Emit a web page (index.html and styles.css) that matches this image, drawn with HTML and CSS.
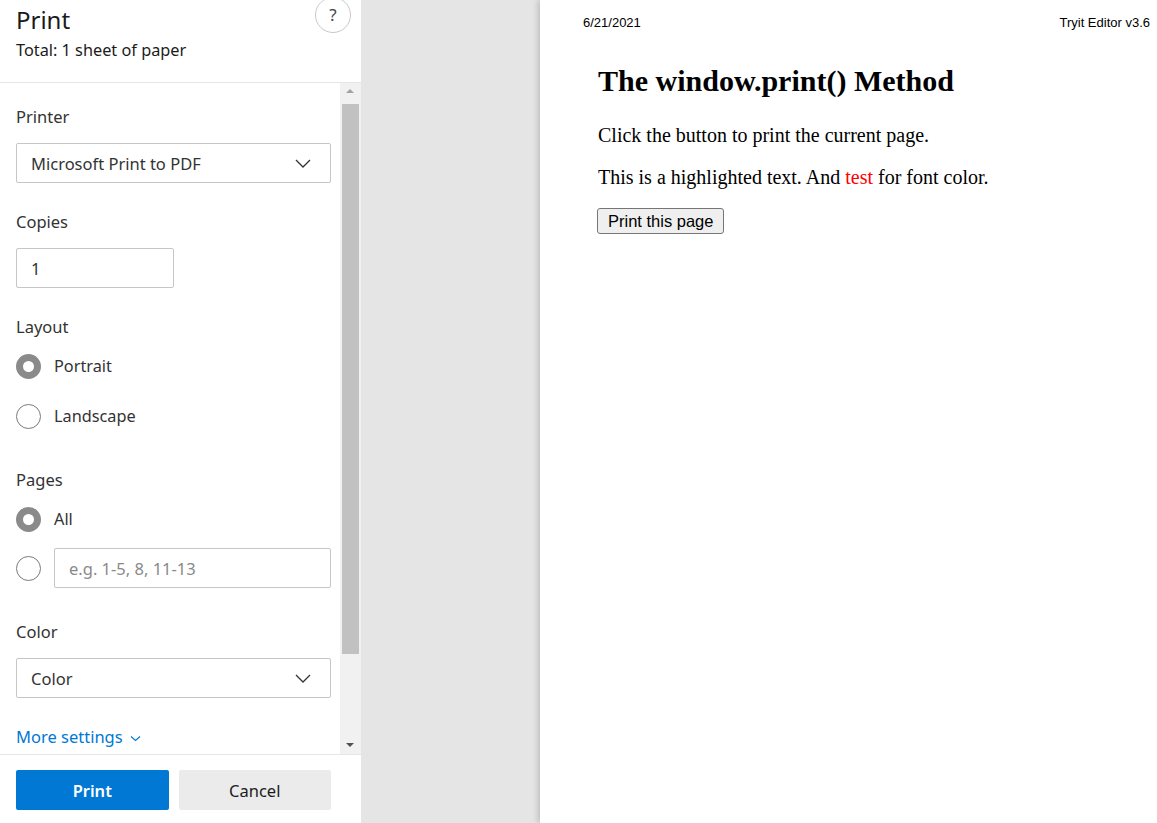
FILE: index.html
```html
<!DOCTYPE html>
<html lang="en">
<head>
<meta charset="utf-8">
<title>Print</title>
<link rel="stylesheet" href="styles.css">
</head>
<body>
<div class="app">
  <aside class="panel">
    <header class="panel-header">
      <div class="titles">
        <h1 class="title">Print</h1>
        <div class="subtitle">Total: 1 sheet of paper</div>
      </div>
      <button class="help" type="button">?</button>
    </header>
    <div class="scroll">
      <div class="content">
        <section class="group">
          <div class="label">Printer</div>
          <div class="select"><span>Microsoft Print to PDF</span>
            <svg class="chev" width="16" height="9" viewBox="0 0 16 9"><path d="M1 1 L8 8 L15 1" fill="none" stroke="#333" stroke-width="1.3"/></svg>
          </div>
        </section>
        <section class="group">
          <div class="label">Copies</div>
          <div class="input short">1</div>
        </section>
        <section class="group layout">
          <div class="label">Layout</div>
          <div class="radio-row first"><span class="radio on"></span><span class="rtext">Portrait</span></div>
          <div class="radio-row"><span class="radio"></span><span class="rtext">Landscape</span></div>
        </section>
        <section class="group pages">
          <div class="label">Pages</div>
          <div class="radio-row first"><span class="radio on"></span><span class="rtext">All</span></div>
          <div class="radio-row custom"><span class="radio"></span><div class="input wide placeholder">e.g. 1-5, 8, 11-13</div></div>
        </section>
        <section class="group color">
          <div class="label">Color</div>
          <div class="select"><span>Color</span>
            <svg class="chev" width="16" height="9" viewBox="0 0 16 9"><path d="M1 1 L8 8 L15 1" fill="none" stroke="#333" stroke-width="1.3"/></svg>
          </div>
        </section>
        <div class="more">More settings
          <svg width="11" height="7" viewBox="0 0 11 7"><path d="M1 1.5 L5.5 5.5 L10 1.5" fill="none" stroke="#0078d4" stroke-width="1.1"/></svg>
        </div>
      </div>
      <div class="scrollbar">
        <div class="arrow up"></div>
        <div class="thumb"></div>
        <div class="track-rest"></div>
        <div class="arrow down"></div>
      </div>
    </div>
    <footer class="panel-footer">
      <button class="btn primary" type="button">Print</button>
      <button class="btn secondary" type="button">Cancel</button>
    </footer>
  </aside>
  <main class="preview">
    <div class="page">
      <div class="page-head">
        <span>6/21/2021</span>
        <span>Tryit Editor v3.6</span>
      </div>
      <div class="doc">
        <h2 class="doc-title">The window.print() Method</h2>
        <p class="doc-p">Click the button to print the current page.</p>
        <p class="doc-p">This is a highlighted text. And <span class="red">test</span> for font color.</p>
        <button class="doc-btn" type="button">Print this page</button>
      </div>
    </div>
  </main>
</div>
</body>
</html>
```

FILE: styles.css
```css
* { box-sizing: border-box; }
html, body { margin: 0; padding: 0; height: 100%; }
body {
  font-family: "Noto Sans", "Open Sans", sans-serif;
  color: #1b1b1b;
  overflow: hidden;
}
.app {
  display: flex;
  height: 823px;
}
.panel {
  width: 361px;
  flex: none;
  display: flex;
  flex-direction: column;
  background: #fff;
}
.panel-header {
  height: 83px;
  border-bottom: 1px solid #e6e6e6;
  display: flex;
  justify-content: space-between;
  align-items: flex-start;
  padding: 0 10px 0 16px;
}
.title {
  margin: 4px 0 0;
  font-size: 24px;
  font-weight: 400;
  line-height: 32px;
  color: #1b1b1b;
}
.subtitle {
  font-size: 16.3px;
  line-height: 22px;
  margin-top: 3px;
  color: #1b1b1b;
}
.help {
  width: 36px;
  height: 36px;
  margin-top: -3px;
  border-radius: 50%;
  border: 1px solid #c8c8c8;
  background: #fff;
  font-family: "Noto Sans", sans-serif;
  font-size: 17px;
  color: #444;
  padding: 0;
  line-height: 34px;
}
.scroll {
  flex: 1;
  display: flex;
  min-height: 0;
}
.content {
  flex: 1;
  padding: 22px 9px 0 16px;
}
.label {
  font-size: 16.5px;
  line-height: 24px;
  color: #333;
  height: 24px;
}
.group { margin-bottom: 27px; }
.group.layout { margin-bottom: 40px; }
.group.pages { margin-bottom: 32px; }
.select {
  margin-top: 14px;
  height: 40px;
  border: 1px solid #c6c6c6;
  border-radius: 2px;
  display: flex;
  align-items: center;
  justify-content: space-between;
  padding: 0 19px 0 14px;
  font-size: 16.5px;
  color: #333;
}
.chev { display: block; }
.input {
  height: 40px;
  border: 1px solid #c6c6c6;
  border-radius: 2px;
  display: flex;
  align-items: center;
  padding: 0 14px;
  font-size: 16.5px;
  color: #333;
}
.input.short { width: 158px; margin-top: 14px; }
.input.wide { flex: 1; margin-left: 13px; }
.placeholder { color: #8a8a8a; }
.radio-row {
  display: flex;
  align-items: center;
  height: 24px;
  margin-top: 26px;
}
.radio-row.first { margin-top: 15px; }
.radio-row.custom { height: 40px; margin-top: 17px; }
.radio {
  width: 25px;
  height: 25px;
  border-radius: 50%;
  border: 1px solid #7a7a7a;
  background: #fff;
  flex: none;
}
.radio.on {
  border: 7px solid #8a8a8a;
}
.rtext {
  margin-left: 13px;
  font-size: 16.3px;
  color: #333;
}
.more {
  font-size: 16.5px;
  line-height: 24px;
  color: #0078d4;
  display: flex;
  align-items: center;
  gap: 7px;
}
.more svg { margin-top: 3px; }
.scrollbar {
  width: 21px;
  flex: none;
  background: #f1f1f1;
  display: flex;
  flex-direction: column;
  align-items: center;
}
.arrow {
  height: 17px;
  width: 100%;
  position: relative;
  flex: none;
}
.arrow.up::after, .arrow.down::after {
  content: "";
  position: absolute;
  left: 6px;
  border-left: 4.5px solid transparent;
  border-right: 4.5px solid transparent;
}
.arrow.up::after {
  top: 6px;
  border-bottom: 4.5px solid #a3a3a3;
}
.arrow.down::after {
  top: 6px;
  border-top: 4.5px solid #505050;
}
.thumb {
  width: 17px;
  height: 550px;
  margin-top: 4px;
  background: #c1c1c1;
  flex: none;
}
.track-rest { flex: 1; }
.panel-footer {
  height: 69px;
  border-top: 1px solid #e6e6e6;
  display: flex;
  gap: 10px;
  padding: 15px 30px 0 16px;
}
.btn {
  height: 40px;
  flex: 1;
  border: none;
  border-radius: 2px;
  font-family: "Noto Sans", sans-serif;
  font-size: 16.5px;
  padding: 0;
}
.btn.primary {
  background: #0078d4;
  color: #fff;
  font-weight: 600;
}
.btn.secondary {
  background: #ebebeb;
  color: #1b1b1b;
}
.preview {
  flex: 1;
  background: #e5e5e5;
  padding-left: 179px;
  display: flex;
  overflow: hidden;
}
.page {
  flex: 1;
  background: #fff;
  box-shadow: -2px 0 6px rgba(0,0,0,0.18);
}
.page-head {
  display: flex;
  justify-content: space-between;
  padding: 15px 7px 0 43px;
  font-family: "Liberation Sans", Arial, sans-serif;
  font-size: 13px;
  line-height: 16px;
  color: #000;
}
.doc {
  padding: 0 0 0 58px;
  font-family: "Liberation Serif", "Times New Roman", serif;
  color: #000;
}
.doc-title {
  font-size: 30px;
  font-weight: 700;
  margin: 32px 0 0;
  line-height: 36px;
}
.doc-p {
  font-size: 20px;
  line-height: 22px;
  margin: 25px 0 0;
}
.doc-p + .doc-p { margin-top: 20px; }
.red { color: #ff0000; }
.doc-btn {
  display: block;
  margin-top: 20px;
  margin-left: -1px;
  font-family: "Liberation Sans", Arial, sans-serif;
  font-size: 16.5px;
  height: 26px;
  padding: 0 10px;
  background: #efefef;
  border: 1px solid #767676;
  border-radius: 3px;
  color: #000;
}
```
